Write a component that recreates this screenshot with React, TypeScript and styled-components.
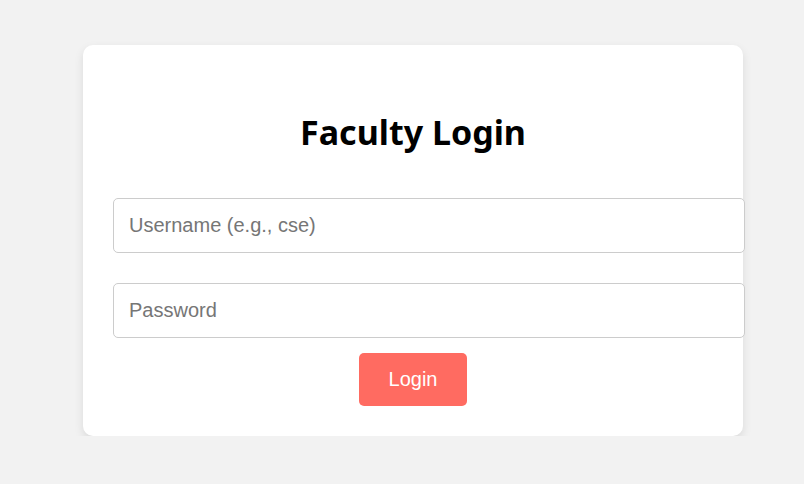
import React from "react";
import styled, { createGlobalStyle } from "styled-components";

const Global = createGlobalStyle`
  html, body { margin: 0; padding: 0; background: #f2f2f2; }
  body { font-family: "Liberation Sans", Arial, sans-serif; }
  * { box-sizing: content-box; }
`;

const Page = styled.div`
  padding: 45px 0 0 83px;
`;

const Card = styled.div`
  width: 600px;
  padding: 30px;
  background: #ffffff;
  border-radius: 10px;
  box-shadow: 0 4px 10px rgba(0, 0, 0, 0.1);
  display: flex;
  flex-direction: column;
  align-items: flex-start;
`;

const Title = styled.h2`
  align-self: stretch;
  text-align: center;
  margin: 38px 0 47px;
  font-family: "Noto Sans", "Open Sans", sans-serif;
  font-weight: 700;
  font-size: 34px;
  line-height: 38px;
  color: #000;
`;

const Input = styled.input<{ $gap: number }>`
  width: 600px;
  padding: 15px;
  border: 1px solid #ccc;
  border-radius: 5px;
  font-family: "Liberation Sans", Arial, sans-serif;
  font-size: 20px;
  line-height: 23px;
  margin: 0 0 ${(p) => p.$gap}px;
  outline: none;
  color: #333;
  &::placeholder { color: #767676; }
`;

const Button = styled.button`
  align-self: center;
  background: #ff6b61;
  color: #fff;
  border: none;
  border-radius: 5px;
  padding: 15px 30px;
  font-family: "Liberation Sans", Arial, sans-serif;
  font-size: 20px;
  line-height: 23px;
  cursor: pointer;
`;

export default function App() {
  return (
    <>
      <Global />
      <Page>
        <Card>
          <Title>Faculty Login</Title>
          <Input $gap={30} type="text" placeholder="Username (e.g., cse)" />
          <Input $gap={15} type="password" placeholder="Password" />
          <Button>Login</Button>
        </Card>
      </Page>
    </>
  );
}
